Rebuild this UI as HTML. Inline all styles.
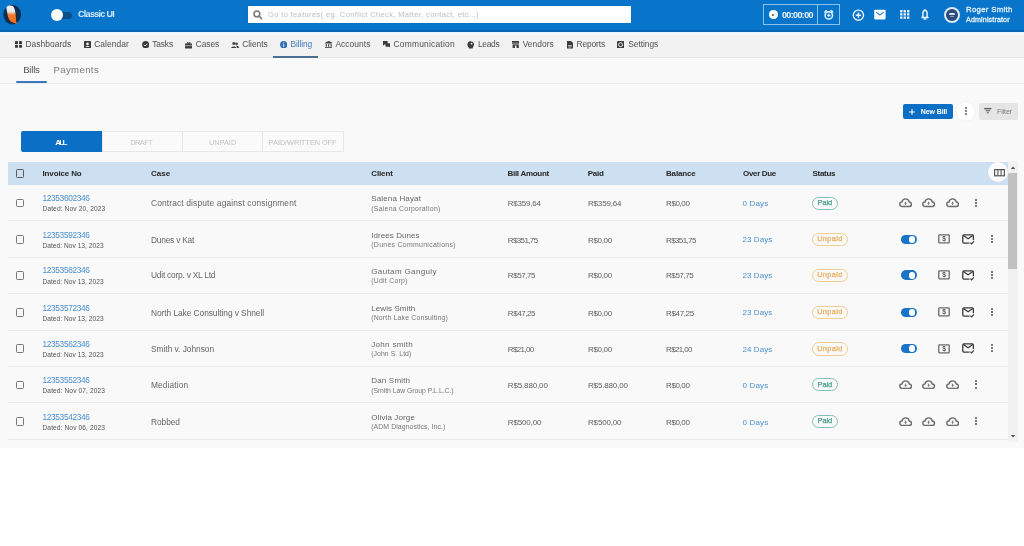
<!DOCTYPE html>
<html><head><meta charset="utf-8"><style>
html,body{margin:0;padding:0;background:#ffffff;width:1024px;height:546px;overflow:hidden;font-family:"Liberation Sans", sans-serif;}
#wrap{position:absolute;left:0;top:0;width:1024px;height:546px;filter:blur(0.4px);}
</style></head><body><div id="wrap">
<div style="position:absolute;left:0;top:0;width:1024px;height:448px;background:#f9f9f9"></div>
<div style="position:absolute;left:0;top:0;width:1024px;height:32px;background:#0875ca"></div>
<div style="position:absolute;left:0;top:29.6px;width:1024px;height:2.1px;background:#0867b4"></div>
<div style="position:absolute;left:0;top:32px;width:1024px;height:3px;background:linear-gradient(#e4f4fb,#fdfdfd)"></div>
<svg style="position:absolute;left:0;top:0" width="30" height="30" viewBox="0 0 30 30">
<defs><linearGradient id="lgg" x1="0" y1="0" x2="0" y2="30" gradientUnits="userSpaceOnUse"><stop offset="0.38" stop-color="#e8edf1"/><stop offset="0.5" stop-color="#f7782a"/><stop offset="1" stop-color="#f5620c"/></linearGradient><clipPath id="lg"><path d="M6.4 7.2 C7.2 5.2 11.6 4.9 13.3 6.6 C14.8 8.6 15.6 12.6 15.8 16.6 C15.9 19.8 16.4 22.4 16.8 23.8 C14.2 23.4 11.3 22.3 9.8 20.6 C8.3 18.6 7.6 15.6 7.2 12.6 C6.9 10.6 6.3 8.8 6.4 7.2 Z"/></clipPath></defs>
<ellipse cx="12.2" cy="14.6" rx="8.9" ry="9.8" fill="#0e2f4d"/>
<g clip-path="url(#lg)"><rect x="0" y="0" width="30" height="30" fill="url(#lgg)"/></g>
</svg>
<div style="position:absolute;left:56px;top:12px;width:16px;height:7px;border-radius:4px;background:#0b4f8c"></div>
<div style="position:absolute;left:51px;top:9px;width:12px;height:12px;border-radius:50%;background:#fff"></div>
<div style="position:absolute;left:248px;top:5.7px;width:383px;height:17.8px;background:#fff;box-shadow:0 0 0.6px rgba(0,0,0,0.25)"></div>
<svg style="position:absolute;left:252px;top:9px" width="12" height="12" viewBox="0 0 12 12">
<circle cx="4.9" cy="4.9" r="2.9" fill="none" stroke="#7a7a7a" stroke-width="1.5"/>
<line x1="7" y1="7" x2="9.6" y2="9.6" stroke="#7a7a7a" stroke-width="1.7" stroke-linecap="round"/></svg>
<div style="position:absolute;left:763px;top:4px;width:77px;height:20.6px;border:1px solid #86c5f2;box-sizing:border-box"></div>
<div style="position:absolute;left:817px;top:4px;width:1px;height:20.6px;background:#86c5f2"></div>
<div style="position:absolute;left:769px;top:10.3px;width:8.5px;height:8.5px;border-radius:50%;background:#fff"></div>
<div style="position:absolute;left:772.2px;top:13.5px;width:2.2px;height:2.2px;border-radius:50%;background:#555"></div>
<svg style="position:absolute;left:822px;top:8px" width="14" height="14" viewBox="0 0 14 14">
<circle cx="6.8" cy="7.4" r="3.7" fill="none" stroke="#e8f4ff" stroke-width="1.5"/>
<path d="M2.6 4.6 A2 2 0 0 1 5 2.6 Z M11 4.6 A2 2 0 0 0 8.6 2.6 Z" fill="#e8f4ff" stroke="#e8f4ff" stroke-width="0.9" stroke-linejoin="round"/>
<path d="M6.8 5.8 V9 M5.2 7.4 H8.4" stroke="#e8f4ff" stroke-width="1.2"/>
</svg>
<svg style="position:absolute;left:851px;top:8px" width="15" height="15" viewBox="0 0 15 15">
<circle cx="7.4" cy="7.2" r="5.1" fill="none" stroke="#e8f4ff" stroke-width="1.4"/>
<path d="M7.4 4.6 V9.8 M4.8 7.2 H10" stroke="#e8f4ff" stroke-width="1.5"/></svg>
<svg style="position:absolute;left:873px;top:9px" width="14" height="12" viewBox="0 0 14 12">
<rect x="1.2" y="0.8" width="11.4" height="9.6" rx="0.8" fill="#f4faff"/>
<path d="M3.2 3.2 L6.9 6 L10.6 3.2" fill="none" stroke="#4a8fd0" stroke-width="1.1"/></svg>
<svg style="position:absolute;left:900px;top:10.2px" width="10" height="9" viewBox="0 0 10 9"><rect x="0.1" y="0.1" width="2.4" height="2.3" rx="0.3" fill="#eaf5ff"/><rect x="3.5500000000000003" y="0.1" width="2.4" height="2.3" rx="0.3" fill="#eaf5ff"/><rect x="7.0" y="0.1" width="2.4" height="2.3" rx="0.3" fill="#eaf5ff"/><rect x="0.1" y="3.25" width="2.4" height="2.3" rx="0.3" fill="#eaf5ff"/><rect x="3.5500000000000003" y="3.25" width="2.4" height="2.3" rx="0.3" fill="#eaf5ff"/><rect x="7.0" y="3.25" width="2.4" height="2.3" rx="0.3" fill="#eaf5ff"/><rect x="0.1" y="6.3999999999999995" width="2.4" height="2.3" rx="0.3" fill="#eaf5ff"/><rect x="3.5500000000000003" y="6.3999999999999995" width="2.4" height="2.3" rx="0.3" fill="#eaf5ff"/><rect x="7.0" y="6.3999999999999995" width="2.4" height="2.3" rx="0.3" fill="#eaf5ff"/></svg>
<svg style="position:absolute;left:919px;top:8px" width="12" height="13" viewBox="0 0 12 13">
<path d="M6 2.6 C4.5 2.6 3.9 4 3.9 5.6 V8.4 L3 9.6 H9 L8.1 8.4 V5.6 C8.1 4 7.5 2.6 6 2.6 Z" fill="none" stroke="#eaf5ff" stroke-width="1.5" stroke-linejoin="round"/>
<circle cx="6" cy="1.9" r="0.8" fill="#eaf5ff"/>
<path d="M5.1 11 H6.9" stroke="#eaf5ff" stroke-width="1.4" stroke-linecap="round"/></svg>
<div style="position:absolute;left:944px;top:6.8px;width:16px;height:16px;border-radius:50%;background:#d9ecfa"></div>
<div style="position:absolute;left:945.8px;top:8.6px;width:12.4px;height:12.4px;border-radius:50%;background:#2d4a78"></div>
<div style="position:absolute;left:949.3px;top:12.8px;width:5.4px;height:2.4px;background:#d5e0f0;border-radius:1px"></div>
<div style="position:absolute;left:950px;top:16.4px;width:4px;height:0.8px;background:#7f98bd"></div>
<div style="position:absolute;left:0;top:35px;width:1024px;height:22.5px;background:#f2f2f2"></div>
<div style="position:absolute;left:0;top:57px;width:1024px;height:1px;background:#e4e4e4"></div>
<svg style="position:absolute;left:15px;top:41.4px" width="7" height="7" viewBox="0 0 7 7"><rect x="0" y="0" width="3" height="3" rx="0.6" fill="#3c3c3c"/><rect x="4" y="0" width="3" height="3" rx="0.6" fill="#3c3c3c"/><rect x="0" y="3.8" width="3" height="3" rx="0.6" fill="#3c3c3c"/><rect x="4" y="3.8" width="3" height="3" rx="0.6" fill="#3c3c3c"/></svg>
<svg style="position:absolute;left:83.8px;top:41px" width="7" height="7.4" viewBox="0 0 7 7.4"><rect x="0" y="0" width="7" height="7.4" rx="0.7" fill="#3c3c3c"/><circle cx="3.5" cy="2.9" r="1.3" fill="#f2f2f2"/><path d="M1.5 6 C1.8 4.6 5.2 4.6 5.5 6 Z" fill="#f2f2f2"/></svg>
<svg style="position:absolute;left:141.5px;top:41px" width="7.4" height="7.4" viewBox="0 0 7.4 7.4"><circle cx="3.7" cy="3.7" r="3.6" fill="#3c3c3c"/><path d="M2 3.8 L3.2 5 L5.5 2.6" fill="none" stroke="#f2f2f2" stroke-width="1"/></svg>
<svg style="position:absolute;left:185px;top:42px" width="7.2" height="6.6" viewBox="0 0 7.2 6.6"><rect x="2.3" y="0" width="2.6" height="1.6" fill="none" stroke="#3c3c3c" stroke-width="0.8"/><rect x="0" y="1.6" width="7.2" height="5" rx="0.6" fill="#3c3c3c"/><rect x="0" y="3.5" width="7.2" height="0.6" fill="#f2f2f2"/></svg>
<svg style="position:absolute;left:230.8px;top:41.8px" width="8" height="6.4" viewBox="0 0 8 6.4"><circle cx="2.8" cy="1.6" r="1.5" fill="#3c3c3c"/><circle cx="5.6" cy="1.7" r="1.3" fill="#3c3c3c"/><path d="M0 6.2 C0 3.8 5.6 3.8 5.6 6.2 Z" fill="#3c3c3c"/><path d="M4.5 3.6 C6.4 3.5 8 4.3 8 6.2 H6.2 C6.2 5 5.6 4.2 4.5 3.6 Z" fill="#3c3c3c"/></svg>
<svg style="position:absolute;left:279.6px;top:41px" width="7.4" height="7.4" viewBox="0 0 7.4 7.4"><circle cx="3.7" cy="3.7" r="3.6" fill="#2f6fb5"/><rect x="3.2" y="3.1" width="1" height="2.8" fill="#f2f2f2"/><circle cx="3.7" cy="1.9" r="0.55" fill="#f2f2f2"/></svg>
<svg style="position:absolute;left:324.6px;top:41px" width="7.4" height="7.4" viewBox="0 0 7.4 7.4"><path d="M3.7 0 L7.4 1.8 V2.6 H0 V1.8 Z" fill="#3c3c3c"/><rect x="0.7" y="3.1" width="1.1" height="2.6" fill="#3c3c3c"/><rect x="3.15" y="3.1" width="1.1" height="2.6" fill="#3c3c3c"/><rect x="5.6" y="3.1" width="1.1" height="2.6" fill="#3c3c3c"/><rect x="0" y="6.2" width="7.4" height="1.2" fill="#3c3c3c"/></svg>
<svg style="position:absolute;left:382.6px;top:41.4px" width="7.6" height="7" viewBox="0 0 7.6 7"><path d="M0 0 H4.6 V3.4 H1.6 L0 4.8 Z" fill="#3c3c3c"/><path d="M2.6 2.2 H7.6 V7 L6.2 5.8 H2.6 Z" fill="#3c3c3c"/></svg>
<svg style="position:absolute;left:466.6px;top:41px" width="7.4" height="7.6" viewBox="0 0 7.4 7.6"><path d="M2.2 0.6 C3.6 -0.3 6.6 0.6 7 2.8 C7.4 4.6 6 5.4 5.6 7.4 H2 C1.8 6.2 0.2 5.6 0.4 3.4 C0.5 2.2 1.2 1.2 2.2 0.6 Z" fill="#3c3c3c"/><circle cx="4.6" cy="2.7" r="0.9" fill="#f2f2f2"/></svg>
<svg style="position:absolute;left:511.6px;top:41.4px" width="7.4" height="7" viewBox="0 0 7.4 7"><path d="M0 0 H7.4 V3 H0 Z" fill="#3c3c3c"/><rect x="0.6" y="3.4" width="6.2" height="3.6" fill="#3c3c3c"/><rect x="2.9" y="4.6" width="1.6" height="2.4" fill="#f2f2f2"/><rect x="0" y="1.8" width="7.4" height="0.5" fill="#f2f2f2"/></svg>
<svg style="position:absolute;left:567px;top:41px" width="6" height="7.6" viewBox="0 0 6 7.6"><path d="M0 0 H4 L6 2 V7.6 H0 Z" fill="#3c3c3c"/><rect x="1.2" y="4.2" width="3.6" height="0.7" fill="#f2f2f2"/><rect x="1.2" y="5.6" width="3.6" height="0.7" fill="#f2f2f2"/></svg>
<svg style="position:absolute;left:617px;top:41px" width="7.2" height="7.4" viewBox="0 0 7.2 7.4"><rect x="0" y="0" width="7.2" height="7.4" rx="1" fill="#3c3c3c"/><circle cx="3.6" cy="3.7" r="2" fill="none" stroke="#f2f2f2" stroke-width="1"/></svg>
<div style="position:absolute;left:273px;top:56px;width:45px;height:2px;background:#4a6f94"></div>
<div style="position:absolute;left:0;top:83px;width:1024px;height:1px;background:#e9e9e9"></div>
<div style="position:absolute;left:16px;top:81.2px;width:31px;height:2.2px;background:#3b78bd;border-radius:1px"></div>
<div style="position:absolute;left:903px;top:103.6px;width:50px;height:15.6px;background:#0b6fc6;border-radius:2px"></div>
<svg style="position:absolute;left:908px;top:107.6px" width="8" height="8" viewBox="0 0 8 8"><path d="M4 1.2 V6.8 M1.2 4 H6.8" stroke="#fff" stroke-width="1.1"/></svg>
<div style="position:absolute;left:956px;top:102px;width:19px;height:19px;border-radius:50%;background:#fff;box-shadow:0 0 1.5px rgba(0,0,0,0.12)"></div>
<div style="position:absolute;left:964.8px;top:107.19999999999999px;width:1.8px;height:1.8px;border-radius:50%;background:#5a5a5a"></div>
<div style="position:absolute;left:964.8px;top:110.3px;width:1.8px;height:1.8px;border-radius:50%;background:#5a5a5a"></div>
<div style="position:absolute;left:964.8px;top:113.39999999999999px;width:1.8px;height:1.8px;border-radius:50%;background:#5a5a5a"></div>
<div style="position:absolute;left:979px;top:103.2px;width:39px;height:16.4px;background:#e5e5e5;border-radius:2px"></div>
<svg style="position:absolute;left:983.5px;top:107px" width="8" height="8" viewBox="0 0 8 8"><path d="M0.3 1.6 H7.4 M1.6 3.7 H6.1 M2.9 5.8 H4.8" stroke="#555" stroke-width="1.1"/></svg>
<div style="position:absolute;left:102px;top:131.2px;width:241.6px;height:21px;border:1px solid #e7e7e7;box-sizing:border-box;background:#fafafa"></div>
<div style="position:absolute;left:182px;top:131.2px;width:1px;height:21px;background:#e7e7e7"></div>
<div style="position:absolute;left:262px;top:131.2px;width:1px;height:21px;background:#e7e7e7"></div>
<div style="position:absolute;left:21px;top:131.2px;width:81px;height:21px;background:#0b6fc6;border-radius:2px 0 0 2px"></div>
<div style="position:absolute;left:8px;top:161.5px;width:1000px;height:23.7px;background:#cde0f1"></div>
<div style="position:absolute;left:16px;top:169.3px;width:8.4px;height:8.4px;border:1.2px solid #5a5a5a;box-sizing:border-box;border-radius:1.4px"></div>
<div style="position:absolute;left:988px;top:162px;width:20px;height:20px;border-radius:50%;background:#fbfbfb;box-shadow:0 0 1px rgba(0,0,0,0.08)"></div>
<svg style="position:absolute;left:993.5px;top:169.4px" width="11" height="7.4" viewBox="0 0 11 7.4"><rect x="0.6" y="0.6" width="9.8" height="6.2" fill="none" stroke="#555" stroke-width="1.2"/><path d="M3.9 0.6 V6.8 M7.1 0.6 V6.8" stroke="#555" stroke-width="1.1"/></svg>
<div style="position:absolute;left:8px;top:220.40px;width:1000px;height:1px;background:#e9e9e9"></div>
<div style="position:absolute;left:15.8px;top:198.80px;width:8.6px;height:8.6px;border:1.2px solid #777;box-sizing:border-box;border-radius:1.5px"></div>
<div style="position:absolute;left:812px;top:196.70px;width:26px;height:13px;border:1.2px solid #80c3b4;box-sizing:border-box;border-radius:7px"></div>
<svg style="position:absolute;left:898.8px;top:198.40px" width="13.4" height="9.4" viewBox="0 0 13.4 9.4"><path d="M3.3 8.5 C1.6 8.5 0.8 7.4 0.8 6.2 C0.8 5 1.7 4.1 2.9 4.1 C3.3 2.2 4.8 0.9 6.6 0.9 C8.5 0.9 9.9 2.2 10.3 4.1 C11.6 4.2 12.5 5.1 12.5 6.3 C12.5 7.6 11.6 8.5 10.2 8.5 Z" fill="none" stroke="#6e6e6e" stroke-width="1.45" stroke-linejoin="round"/><path d="M6.6 3.8 V5.4" stroke="#6e6e6e" stroke-width="1.1"/><path d="M5.2 5.2 H8 L6.6 7 Z" fill="#6e6e6e"/></svg>
<svg style="position:absolute;left:922.3px;top:198.40px" width="13.4" height="9.4" viewBox="0 0 13.4 9.4"><path d="M3.3 8.5 C1.6 8.5 0.8 7.4 0.8 6.2 C0.8 5 1.7 4.1 2.9 4.1 C3.3 2.2 4.8 0.9 6.6 0.9 C8.5 0.9 9.9 2.2 10.3 4.1 C11.6 4.2 12.5 5.1 12.5 6.3 C12.5 7.6 11.6 8.5 10.2 8.5 Z" fill="none" stroke="#6e6e6e" stroke-width="1.45" stroke-linejoin="round"/><path d="M6.6 3.8 V5.4" stroke="#6e6e6e" stroke-width="1.1"/><path d="M5.2 5.2 H8 L6.6 7 Z" fill="#6e6e6e"/></svg>
<svg style="position:absolute;left:946px;top:198.40px" width="13.4" height="9.4" viewBox="0 0 13.4 9.4"><path d="M3.3 8.5 C1.6 8.5 0.8 7.4 0.8 6.2 C0.8 5 1.7 4.1 2.9 4.1 C3.3 2.2 4.8 0.9 6.6 0.9 C8.5 0.9 9.9 2.2 10.3 4.1 C11.6 4.2 12.5 5.1 12.5 6.3 C12.5 7.6 11.6 8.5 10.2 8.5 Z" fill="none" stroke="#6e6e6e" stroke-width="1.45" stroke-linejoin="round"/><path d="M6.6 3.8 V5.4" stroke="#6e6e6e" stroke-width="1.1"/><path d="M5.2 5.2 H8 L6.6 7 Z" fill="#6e6e6e"/></svg>
<div style="position:absolute;left:975.3px;top:198.60px;width:2px;height:2px;border-radius:50%;background:#505050"></div>
<div style="position:absolute;left:975.3px;top:201.70px;width:2px;height:2px;border-radius:50%;background:#505050"></div>
<div style="position:absolute;left:975.3px;top:204.80px;width:2px;height:2px;border-radius:50%;background:#505050"></div>
<div style="position:absolute;left:8px;top:257.00px;width:1000px;height:1px;background:#e9e9e9"></div>
<div style="position:absolute;left:15.8px;top:235.22px;width:8.6px;height:8.6px;border:1.2px solid #777;box-sizing:border-box;border-radius:1.5px"></div>
<div style="position:absolute;left:811.6px;top:233.02px;width:36px;height:13.4px;border:1.2px solid #f2cd90;box-sizing:border-box;border-radius:7px"></div>
<div style="position:absolute;left:900.8px;top:234.52px;width:15.8px;height:9.4px;border-radius:5px;background:#1a73c6"></div>
<div style="position:absolute;left:908.5px;top:235.82px;width:6.8px;height:6.8px;border-radius:50%;background:#fff"></div>
<svg style="position:absolute;left:938px;top:234.42px" width="12" height="10" viewBox="0 0 12 10"><rect x="0.8" y="0.8" width="10.4" height="8" rx="0.6" fill="none" stroke="#6a6a6a" stroke-width="1.3"/><text x="6" y="7.4" font-family="Liberation Sans" font-size="6.6" font-weight="700" text-anchor="middle" fill="#555">$</text></svg>
<svg style="position:absolute;left:962px;top:233.92px" width="13" height="11" viewBox="0 0 13 11"><path d="M7.5 9.2 H1.9 C1.2 9.2 0.8 8.8 0.8 8.1 V1.9 C0.8 1.2 1.2 0.8 1.9 0.8 H10.3 C11 0.8 11.4 1.2 11.4 1.9 V6.2" fill="none" stroke="#3a3a3a" stroke-width="1.3"/><path d="M1.4 1.6 L6.1 4.8 L10.8 1.6" fill="none" stroke="#3a3a3a" stroke-width="1.2"/><path d="M8.4 8.6 L9.6 9.8 L11.9 7.4" fill="none" stroke="#3a3a3a" stroke-width="1.2"/></svg>
<div style="position:absolute;left:990.5px;top:235.02px;width:2px;height:2px;border-radius:50%;background:#505050"></div>
<div style="position:absolute;left:990.5px;top:238.12px;width:2px;height:2px;border-radius:50%;background:#505050"></div>
<div style="position:absolute;left:990.5px;top:241.22px;width:2px;height:2px;border-radius:50%;background:#505050"></div>
<div style="position:absolute;left:8px;top:292.70px;width:1000px;height:1px;background:#e9e9e9"></div>
<div style="position:absolute;left:15.8px;top:271.14px;width:8.6px;height:8.6px;border:1.2px solid #777;box-sizing:border-box;border-radius:1.5px"></div>
<div style="position:absolute;left:811.6px;top:268.94px;width:36px;height:13.4px;border:1.2px solid #f2cd90;box-sizing:border-box;border-radius:7px"></div>
<div style="position:absolute;left:900.8px;top:270.44px;width:15.8px;height:9.4px;border-radius:5px;background:#1a73c6"></div>
<div style="position:absolute;left:908.5px;top:271.74px;width:6.8px;height:6.8px;border-radius:50%;background:#fff"></div>
<svg style="position:absolute;left:938px;top:270.34px" width="12" height="10" viewBox="0 0 12 10"><rect x="0.8" y="0.8" width="10.4" height="8" rx="0.6" fill="none" stroke="#6a6a6a" stroke-width="1.3"/><text x="6" y="7.4" font-family="Liberation Sans" font-size="6.6" font-weight="700" text-anchor="middle" fill="#555">$</text></svg>
<svg style="position:absolute;left:962px;top:269.84px" width="13" height="11" viewBox="0 0 13 11"><path d="M7.5 9.2 H1.9 C1.2 9.2 0.8 8.8 0.8 8.1 V1.9 C0.8 1.2 1.2 0.8 1.9 0.8 H10.3 C11 0.8 11.4 1.2 11.4 1.9 V6.2" fill="none" stroke="#3a3a3a" stroke-width="1.3"/><path d="M1.4 1.6 L6.1 4.8 L10.8 1.6" fill="none" stroke="#3a3a3a" stroke-width="1.2"/><path d="M8.4 8.6 L9.6 9.8 L11.9 7.4" fill="none" stroke="#3a3a3a" stroke-width="1.2"/></svg>
<div style="position:absolute;left:990.5px;top:270.94px;width:2px;height:2px;border-radius:50%;background:#505050"></div>
<div style="position:absolute;left:990.5px;top:274.04px;width:2px;height:2px;border-radius:50%;background:#505050"></div>
<div style="position:absolute;left:990.5px;top:277.14px;width:2px;height:2px;border-radius:50%;background:#505050"></div>
<div style="position:absolute;left:8px;top:329.60px;width:1000px;height:1px;background:#e9e9e9"></div>
<div style="position:absolute;left:15.8px;top:308.26px;width:8.6px;height:8.6px;border:1.2px solid #777;box-sizing:border-box;border-radius:1.5px"></div>
<div style="position:absolute;left:811.6px;top:306.06px;width:36px;height:13.4px;border:1.2px solid #f2cd90;box-sizing:border-box;border-radius:7px"></div>
<div style="position:absolute;left:900.8px;top:307.56px;width:15.8px;height:9.4px;border-radius:5px;background:#1a73c6"></div>
<div style="position:absolute;left:908.5px;top:308.86px;width:6.8px;height:6.8px;border-radius:50%;background:#fff"></div>
<svg style="position:absolute;left:938px;top:307.46px" width="12" height="10" viewBox="0 0 12 10"><rect x="0.8" y="0.8" width="10.4" height="8" rx="0.6" fill="none" stroke="#6a6a6a" stroke-width="1.3"/><text x="6" y="7.4" font-family="Liberation Sans" font-size="6.6" font-weight="700" text-anchor="middle" fill="#555">$</text></svg>
<svg style="position:absolute;left:962px;top:306.96px" width="13" height="11" viewBox="0 0 13 11"><path d="M7.5 9.2 H1.9 C1.2 9.2 0.8 8.8 0.8 8.1 V1.9 C0.8 1.2 1.2 0.8 1.9 0.8 H10.3 C11 0.8 11.4 1.2 11.4 1.9 V6.2" fill="none" stroke="#3a3a3a" stroke-width="1.3"/><path d="M1.4 1.6 L6.1 4.8 L10.8 1.6" fill="none" stroke="#3a3a3a" stroke-width="1.2"/><path d="M8.4 8.6 L9.6 9.8 L11.9 7.4" fill="none" stroke="#3a3a3a" stroke-width="1.2"/></svg>
<div style="position:absolute;left:990.5px;top:308.06px;width:2px;height:2px;border-radius:50%;background:#505050"></div>
<div style="position:absolute;left:990.5px;top:311.16px;width:2px;height:2px;border-radius:50%;background:#505050"></div>
<div style="position:absolute;left:990.5px;top:314.26px;width:2px;height:2px;border-radius:50%;background:#505050"></div>
<div style="position:absolute;left:8px;top:365.50px;width:1000px;height:1px;background:#e9e9e9"></div>
<div style="position:absolute;left:15.8px;top:344.48px;width:8.6px;height:8.6px;border:1.2px solid #777;box-sizing:border-box;border-radius:1.5px"></div>
<div style="position:absolute;left:811.6px;top:342.28px;width:36px;height:13.4px;border:1.2px solid #f2cd90;box-sizing:border-box;border-radius:7px"></div>
<div style="position:absolute;left:900.8px;top:343.78px;width:15.8px;height:9.4px;border-radius:5px;background:#1a73c6"></div>
<div style="position:absolute;left:908.5px;top:345.08px;width:6.8px;height:6.8px;border-radius:50%;background:#fff"></div>
<svg style="position:absolute;left:938px;top:343.68px" width="12" height="10" viewBox="0 0 12 10"><rect x="0.8" y="0.8" width="10.4" height="8" rx="0.6" fill="none" stroke="#6a6a6a" stroke-width="1.3"/><text x="6" y="7.4" font-family="Liberation Sans" font-size="6.6" font-weight="700" text-anchor="middle" fill="#555">$</text></svg>
<svg style="position:absolute;left:962px;top:343.18px" width="13" height="11" viewBox="0 0 13 11"><path d="M7.5 9.2 H1.9 C1.2 9.2 0.8 8.8 0.8 8.1 V1.9 C0.8 1.2 1.2 0.8 1.9 0.8 H10.3 C11 0.8 11.4 1.2 11.4 1.9 V6.2" fill="none" stroke="#3a3a3a" stroke-width="1.3"/><path d="M1.4 1.6 L6.1 4.8 L10.8 1.6" fill="none" stroke="#3a3a3a" stroke-width="1.2"/><path d="M8.4 8.6 L9.6 9.8 L11.9 7.4" fill="none" stroke="#3a3a3a" stroke-width="1.2"/></svg>
<div style="position:absolute;left:990.5px;top:344.28px;width:2px;height:2px;border-radius:50%;background:#505050"></div>
<div style="position:absolute;left:990.5px;top:347.38px;width:2px;height:2px;border-radius:50%;background:#505050"></div>
<div style="position:absolute;left:990.5px;top:350.48px;width:2px;height:2px;border-radius:50%;background:#505050"></div>
<div style="position:absolute;left:8px;top:402.10px;width:1000px;height:1px;background:#e9e9e9"></div>
<div style="position:absolute;left:15.8px;top:380.50px;width:8.6px;height:8.6px;border:1.2px solid #777;box-sizing:border-box;border-radius:1.5px"></div>
<div style="position:absolute;left:812px;top:378.40px;width:26px;height:13px;border:1.2px solid #80c3b4;box-sizing:border-box;border-radius:7px"></div>
<svg style="position:absolute;left:898.8px;top:380.10px" width="13.4" height="9.4" viewBox="0 0 13.4 9.4"><path d="M3.3 8.5 C1.6 8.5 0.8 7.4 0.8 6.2 C0.8 5 1.7 4.1 2.9 4.1 C3.3 2.2 4.8 0.9 6.6 0.9 C8.5 0.9 9.9 2.2 10.3 4.1 C11.6 4.2 12.5 5.1 12.5 6.3 C12.5 7.6 11.6 8.5 10.2 8.5 Z" fill="none" stroke="#6e6e6e" stroke-width="1.45" stroke-linejoin="round"/><path d="M6.6 3.8 V5.4" stroke="#6e6e6e" stroke-width="1.1"/><path d="M5.2 5.2 H8 L6.6 7 Z" fill="#6e6e6e"/></svg>
<svg style="position:absolute;left:922.3px;top:380.10px" width="13.4" height="9.4" viewBox="0 0 13.4 9.4"><path d="M3.3 8.5 C1.6 8.5 0.8 7.4 0.8 6.2 C0.8 5 1.7 4.1 2.9 4.1 C3.3 2.2 4.8 0.9 6.6 0.9 C8.5 0.9 9.9 2.2 10.3 4.1 C11.6 4.2 12.5 5.1 12.5 6.3 C12.5 7.6 11.6 8.5 10.2 8.5 Z" fill="none" stroke="#6e6e6e" stroke-width="1.45" stroke-linejoin="round"/><path d="M6.6 3.8 V5.4" stroke="#6e6e6e" stroke-width="1.1"/><path d="M5.2 5.2 H8 L6.6 7 Z" fill="#6e6e6e"/></svg>
<svg style="position:absolute;left:946px;top:380.10px" width="13.4" height="9.4" viewBox="0 0 13.4 9.4"><path d="M3.3 8.5 C1.6 8.5 0.8 7.4 0.8 6.2 C0.8 5 1.7 4.1 2.9 4.1 C3.3 2.2 4.8 0.9 6.6 0.9 C8.5 0.9 9.9 2.2 10.3 4.1 C11.6 4.2 12.5 5.1 12.5 6.3 C12.5 7.6 11.6 8.5 10.2 8.5 Z" fill="none" stroke="#6e6e6e" stroke-width="1.45" stroke-linejoin="round"/><path d="M6.6 3.8 V5.4" stroke="#6e6e6e" stroke-width="1.1"/><path d="M5.2 5.2 H8 L6.6 7 Z" fill="#6e6e6e"/></svg>
<div style="position:absolute;left:975.3px;top:380.30px;width:2px;height:2px;border-radius:50%;background:#505050"></div>
<div style="position:absolute;left:975.3px;top:383.40px;width:2px;height:2px;border-radius:50%;background:#505050"></div>
<div style="position:absolute;left:975.3px;top:386.50px;width:2px;height:2px;border-radius:50%;background:#505050"></div>
<div style="position:absolute;left:8px;top:438.80px;width:1000px;height:1px;background:#e9e9e9"></div>
<div style="position:absolute;left:15.8px;top:417.32px;width:8.6px;height:8.6px;border:1.2px solid #777;box-sizing:border-box;border-radius:1.5px"></div>
<div style="position:absolute;left:812px;top:415.22px;width:26px;height:13px;border:1.2px solid #80c3b4;box-sizing:border-box;border-radius:7px"></div>
<svg style="position:absolute;left:898.8px;top:416.92px" width="13.4" height="9.4" viewBox="0 0 13.4 9.4"><path d="M3.3 8.5 C1.6 8.5 0.8 7.4 0.8 6.2 C0.8 5 1.7 4.1 2.9 4.1 C3.3 2.2 4.8 0.9 6.6 0.9 C8.5 0.9 9.9 2.2 10.3 4.1 C11.6 4.2 12.5 5.1 12.5 6.3 C12.5 7.6 11.6 8.5 10.2 8.5 Z" fill="none" stroke="#6e6e6e" stroke-width="1.45" stroke-linejoin="round"/><path d="M6.6 3.8 V5.4" stroke="#6e6e6e" stroke-width="1.1"/><path d="M5.2 5.2 H8 L6.6 7 Z" fill="#6e6e6e"/></svg>
<svg style="position:absolute;left:922.3px;top:416.92px" width="13.4" height="9.4" viewBox="0 0 13.4 9.4"><path d="M3.3 8.5 C1.6 8.5 0.8 7.4 0.8 6.2 C0.8 5 1.7 4.1 2.9 4.1 C3.3 2.2 4.8 0.9 6.6 0.9 C8.5 0.9 9.9 2.2 10.3 4.1 C11.6 4.2 12.5 5.1 12.5 6.3 C12.5 7.6 11.6 8.5 10.2 8.5 Z" fill="none" stroke="#6e6e6e" stroke-width="1.45" stroke-linejoin="round"/><path d="M6.6 3.8 V5.4" stroke="#6e6e6e" stroke-width="1.1"/><path d="M5.2 5.2 H8 L6.6 7 Z" fill="#6e6e6e"/></svg>
<svg style="position:absolute;left:946px;top:416.92px" width="13.4" height="9.4" viewBox="0 0 13.4 9.4"><path d="M3.3 8.5 C1.6 8.5 0.8 7.4 0.8 6.2 C0.8 5 1.7 4.1 2.9 4.1 C3.3 2.2 4.8 0.9 6.6 0.9 C8.5 0.9 9.9 2.2 10.3 4.1 C11.6 4.2 12.5 5.1 12.5 6.3 C12.5 7.6 11.6 8.5 10.2 8.5 Z" fill="none" stroke="#6e6e6e" stroke-width="1.45" stroke-linejoin="round"/><path d="M6.6 3.8 V5.4" stroke="#6e6e6e" stroke-width="1.1"/><path d="M5.2 5.2 H8 L6.6 7 Z" fill="#6e6e6e"/></svg>
<div style="position:absolute;left:975.3px;top:417.12px;width:2px;height:2px;border-radius:50%;background:#505050"></div>
<div style="position:absolute;left:975.3px;top:420.22px;width:2px;height:2px;border-radius:50%;background:#505050"></div>
<div style="position:absolute;left:975.3px;top:423.32px;width:2px;height:2px;border-radius:50%;background:#505050"></div>
<div style="position:absolute;left:1008px;top:161px;width:10px;height:281px;background:#f1f1f1"></div>
<div style="position:absolute;left:1008.3px;top:172.7px;width:9.2px;height:96.6px;background:#c1c1c1"></div>
<svg style="position:absolute;left:1009px;top:164.5px" width="8" height="5" viewBox="0 0 8 5"><path d="M1.8 4 L4 1.6 L6.2 4 Z" fill="#555"/></svg>
<svg style="position:absolute;left:1009px;top:434px" width="8" height="5" viewBox="0 0 8 5"><path d="M1.8 1 L4 3.4 L6.2 1 Z" fill="#555"/></svg>
<div style="position:absolute;left:78.00px;top:10px;font-size:9px;line-height:9px;font-weight:700;color:#d2ebfc;letter-spacing:-0.702px;white-space:pre;">Classic UI</div>
<div style="position:absolute;left:268.00px;top:11px;font-size:7.6px;line-height:7.6px;font-weight:400;color:#bdbdbd;letter-spacing:0.321px;white-space:pre;">Go to features( eg. Conflict Check, Matter, contact, etc...)</div>
<div style="position:absolute;left:782.00px;top:11px;font-size:9px;line-height:9px;font-weight:700;color:#f2f9ff;letter-spacing:-0.632px;white-space:pre;">00:00:00</div>
<div style="position:absolute;left:966.00px;top:6px;font-size:7.8px;line-height:7.8px;font-weight:400;color:#e2f1fd;letter-spacing:0.300px;white-space:pre;-webkit-text-stroke:0.3px #e2f1fd;">Roger Smith</div>
<div style="position:absolute;left:966.00px;top:16px;font-size:7.2px;line-height:7.2px;font-weight:400;color:#e2f1fd;letter-spacing:0.105px;white-space:pre;-webkit-text-stroke:0.3px #e2f1fd;">Administrator</div>
<div style="position:absolute;left:25.40px;top:40px;font-size:8.4px;line-height:8.4px;font-weight:400;color:#4f4f4f;letter-spacing:0.081px;white-space:pre;">Dashboards</div>
<div style="position:absolute;left:94.20px;top:40px;font-size:8.4px;line-height:8.4px;font-weight:400;color:#4f4f4f;letter-spacing:0.072px;white-space:pre;">Calendar</div>
<div style="position:absolute;left:152.30px;top:40px;font-size:8.4px;line-height:8.4px;font-weight:400;color:#4f4f4f;letter-spacing:-0.155px;white-space:pre;">Tasks</div>
<div style="position:absolute;left:195.70px;top:40px;font-size:8.4px;line-height:8.4px;font-weight:400;color:#4f4f4f;letter-spacing:-0.038px;white-space:pre;">Cases</div>
<div style="position:absolute;left:242.20px;top:40px;font-size:8.4px;line-height:8.4px;font-weight:400;color:#4f4f4f;letter-spacing:-0.002px;white-space:pre;">Clients</div>
<div style="position:absolute;left:290.60px;top:40px;font-size:8.4px;line-height:8.4px;font-weight:400;color:#3f78b8;letter-spacing:-0.131px;white-space:pre;">Billing</div>
<div style="position:absolute;left:335.40px;top:40px;font-size:8.4px;line-height:8.4px;font-weight:400;color:#4f4f4f;letter-spacing:0.077px;white-space:pre;">Accounts</div>
<div style="position:absolute;left:393.60px;top:40px;font-size:8.4px;line-height:8.4px;font-weight:400;color:#4f4f4f;letter-spacing:0.231px;white-space:pre;">Communication</div>
<div style="position:absolute;left:478.00px;top:40px;font-size:8.4px;line-height:8.4px;font-weight:400;color:#4f4f4f;letter-spacing:-0.283px;white-space:pre;">Leads</div>
<div style="position:absolute;left:522.70px;top:40px;font-size:8.4px;line-height:8.4px;font-weight:400;color:#4f4f4f;letter-spacing:0.059px;white-space:pre;">Vendors</div>
<div style="position:absolute;left:576.60px;top:40px;font-size:8.4px;line-height:8.4px;font-weight:400;color:#4f4f4f;letter-spacing:-0.123px;white-space:pre;">Reports</div>
<div style="position:absolute;left:628.20px;top:40px;font-size:8.4px;line-height:8.4px;font-weight:400;color:#4f4f4f;letter-spacing:-0.025px;white-space:pre;">Settings</div>
<div style="position:absolute;left:23.20px;top:65px;font-size:9.6px;line-height:9.6px;font-weight:400;color:#555;letter-spacing:-0.223px;white-space:pre;">Bills</div>
<div style="position:absolute;left:53.50px;top:65px;font-size:9.6px;line-height:9.6px;font-weight:400;color:#7a7a7a;letter-spacing:0.363px;white-space:pre;">Payments</div>
<div style="position:absolute;left:920.80px;top:108px;font-size:7px;line-height:7px;font-weight:700;color:#ffffff;letter-spacing:-0.112px;white-space:pre;">New Bill</div>
<div style="position:absolute;left:997.00px;top:108px;font-size:7.2px;line-height:7.2px;font-weight:400;color:#7c7c7c;letter-spacing:-0.156px;white-space:pre;">Filter</div>
<div style="position:absolute;left:55.30px;top:139px;font-size:8px;line-height:8px;font-weight:700;color:#ffffff;letter-spacing:-1.732px;white-space:pre;">ALL</div>
<div style="position:absolute;left:130.20px;top:139px;font-size:7.3px;line-height:7.3px;font-weight:400;color:#c2c2c2;letter-spacing:-0.466px;white-space:pre;">DRAFT</div>
<div style="position:absolute;left:209.00px;top:139px;font-size:7.3px;line-height:7.3px;font-weight:400;color:#c2c2c2;letter-spacing:0.028px;white-space:pre;">UNPAID</div>
<div style="position:absolute;left:268.80px;top:139px;font-size:7.3px;line-height:7.3px;font-weight:400;color:#c2c2c2;letter-spacing:-0.047px;white-space:pre;">PAID/WRITTEN OFF</div>
<div style="position:absolute;left:42.50px;top:170px;font-size:8px;line-height:8px;font-weight:700;color:#262626;letter-spacing:-0.141px;white-space:pre;">Invoice No</div>
<div style="position:absolute;left:151.00px;top:170px;font-size:8px;line-height:8px;font-weight:700;color:#262626;letter-spacing:0.041px;white-space:pre;">Case</div>
<div style="position:absolute;left:371.30px;top:170px;font-size:8px;line-height:8px;font-weight:700;color:#262626;letter-spacing:-0.132px;white-space:pre;">Client</div>
<div style="position:absolute;left:507.50px;top:170px;font-size:8px;line-height:8px;font-weight:700;color:#262626;letter-spacing:-0.292px;white-space:pre;">Bill Amount</div>
<div style="position:absolute;left:587.80px;top:170px;font-size:8px;line-height:8px;font-weight:700;color:#262626;letter-spacing:-0.269px;white-space:pre;">Paid</div>
<div style="position:absolute;left:666.00px;top:170px;font-size:8px;line-height:8px;font-weight:700;color:#262626;letter-spacing:-0.172px;white-space:pre;">Balance</div>
<div style="position:absolute;left:743.10px;top:170px;font-size:8px;line-height:8px;font-weight:700;color:#262626;letter-spacing:-0.346px;white-space:pre;">Over Due</div>
<div style="position:absolute;left:812.60px;top:170px;font-size:8px;line-height:8px;font-weight:700;color:#262626;letter-spacing:-0.320px;white-space:pre;">Status</div>
<div style="position:absolute;left:42.50px;top:194px;font-size:8.3px;line-height:8.3px;font-weight:400;color:#4b8fcf;letter-spacing:-0.334px;white-space:pre;">12353602346</div>
<div style="position:absolute;left:42.50px;top:206px;font-size:6.6px;line-height:6.6px;font-weight:400;color:#555;letter-spacing:0.121px;white-space:pre;">Dated: Nov 20, 2023</div>
<div style="position:absolute;left:151.00px;top:199px;font-size:8.4px;line-height:8.4px;font-weight:400;color:#666;letter-spacing:0.148px;white-space:pre;">Contract dispute against consignment</div>
<div style="position:absolute;left:371.25px;top:195px;font-size:8px;line-height:8px;font-weight:400;color:#666;letter-spacing:0.149px;white-space:pre;">Salena Hayat</div>
<div style="position:absolute;left:371.25px;top:206px;font-size:6.9px;line-height:6.9px;font-weight:400;color:#777;letter-spacing:0.267px;white-space:pre;">(Salena Corporation)</div>
<div style="position:absolute;left:507.80px;top:200px;font-size:8px;line-height:8px;font-weight:400;color:#5e5e5e;letter-spacing:-0.207px;white-space:pre;">R$359,64</div>
<div style="position:absolute;left:588.00px;top:200px;font-size:8px;line-height:8px;font-weight:400;color:#5e5e5e;letter-spacing:-0.178px;white-space:pre;">R$359,64</div>
<div style="position:absolute;left:666.00px;top:200px;font-size:8px;line-height:8px;font-weight:400;color:#5e5e5e;letter-spacing:-0.390px;white-space:pre;">R$0,00</div>
<div style="position:absolute;left:742.50px;top:200px;font-size:8px;line-height:8px;font-weight:400;color:#4b8fcf;letter-spacing:0.180px;white-space:pre;">0 Days</div>
<div style="position:absolute;left:817.60px;top:199px;font-size:7.4px;line-height:7.4px;font-weight:400;color:#4a9f8c;letter-spacing:-0.127px;white-space:pre;-webkit-text-stroke:0.25px #4a9f8c;">Paid</div>
<div style="position:absolute;left:42.50px;top:231px;font-size:8.3px;line-height:8.3px;font-weight:400;color:#4b8fcf;letter-spacing:-0.334px;white-space:pre;">12353592346</div>
<div style="position:absolute;left:42.50px;top:243px;font-size:6.6px;line-height:6.6px;font-weight:400;color:#555;letter-spacing:0.032px;white-space:pre;">Dated: Nov 13, 2023</div>
<div style="position:absolute;left:151.00px;top:236px;font-size:8.4px;line-height:8.4px;font-weight:400;color:#666;letter-spacing:-0.229px;white-space:pre;">Dunes v Kat</div>
<div style="position:absolute;left:371.25px;top:232px;font-size:8px;line-height:8px;font-weight:400;color:#666;letter-spacing:0.070px;white-space:pre;">Idrees Dunes</div>
<div style="position:absolute;left:371.25px;top:242px;font-size:6.9px;line-height:6.9px;font-weight:400;color:#777;letter-spacing:0.310px;white-space:pre;">(Dunes Communications)</div>
<div style="position:absolute;left:507.80px;top:237px;font-size:8px;line-height:8px;font-weight:400;color:#5e5e5e;letter-spacing:-0.621px;white-space:pre;">R$351,75</div>
<div style="position:absolute;left:588.00px;top:237px;font-size:8px;line-height:8px;font-weight:400;color:#5e5e5e;letter-spacing:-0.330px;white-space:pre;">R$0,00</div>
<div style="position:absolute;left:666.00px;top:237px;font-size:8px;line-height:8px;font-weight:400;color:#5e5e5e;letter-spacing:-0.621px;white-space:pre;">R$351,75</div>
<div style="position:absolute;left:742.50px;top:236px;font-size:8px;line-height:8px;font-weight:400;color:#4b8fcf;letter-spacing:0.059px;white-space:pre;">23 Days</div>
<div style="position:absolute;left:817.20px;top:235px;font-size:7.4px;line-height:7.4px;font-weight:400;color:#e8b060;letter-spacing:0.338px;white-space:pre;-webkit-text-stroke:0.25px #e8b060;">Unpaid</div>
<div style="position:absolute;left:42.50px;top:266px;font-size:8.3px;line-height:8.3px;font-weight:400;color:#4b8fcf;letter-spacing:-0.334px;white-space:pre;">12353582346</div>
<div style="position:absolute;left:42.50px;top:279px;font-size:6.6px;line-height:6.6px;font-weight:400;color:#555;letter-spacing:0.032px;white-space:pre;">Dated: Nov 13, 2023</div>
<div style="position:absolute;left:151.00px;top:271px;font-size:8.4px;line-height:8.4px;font-weight:400;color:#666;letter-spacing:-0.230px;white-space:pre;">Udit corp. v XL Ltd</div>
<div style="position:absolute;left:371.25px;top:268px;font-size:8px;line-height:8px;font-weight:400;color:#666;letter-spacing:0.367px;white-space:pre;">Gautam Ganguly</div>
<div style="position:absolute;left:371.25px;top:278px;font-size:6.9px;line-height:6.9px;font-weight:400;color:#777;letter-spacing:0.245px;white-space:pre;">(Udit Corp)</div>
<div style="position:absolute;left:507.80px;top:272px;font-size:8px;line-height:8px;font-weight:400;color:#5e5e5e;letter-spacing:-0.416px;white-space:pre;">R$57,75</div>
<div style="position:absolute;left:588.00px;top:272px;font-size:8px;line-height:8px;font-weight:400;color:#5e5e5e;letter-spacing:-0.330px;white-space:pre;">R$0,00</div>
<div style="position:absolute;left:666.00px;top:272px;font-size:8px;line-height:8px;font-weight:400;color:#5e5e5e;letter-spacing:-0.416px;white-space:pre;">R$57,75</div>
<div style="position:absolute;left:742.50px;top:272px;font-size:8px;line-height:8px;font-weight:400;color:#4b8fcf;letter-spacing:0.059px;white-space:pre;">23 Days</div>
<div style="position:absolute;left:817.20px;top:271px;font-size:7.4px;line-height:7.4px;font-weight:400;color:#e8b060;letter-spacing:0.338px;white-space:pre;-webkit-text-stroke:0.25px #e8b060;">Unpaid</div>
<div style="position:absolute;left:42.50px;top:304px;font-size:8.3px;line-height:8.3px;font-weight:400;color:#4b8fcf;letter-spacing:-0.334px;white-space:pre;">12353572346</div>
<div style="position:absolute;left:42.50px;top:316px;font-size:6.6px;line-height:6.6px;font-weight:400;color:#555;letter-spacing:0.032px;white-space:pre;">Dated: Nov 13, 2023</div>
<div style="position:absolute;left:151.00px;top:309px;font-size:8.4px;line-height:8.4px;font-weight:400;color:#666;letter-spacing:-0.066px;white-space:pre;">North Lake Consulting v Shnell</div>
<div style="position:absolute;left:371.25px;top:305px;font-size:8px;line-height:8px;font-weight:400;color:#666;letter-spacing:0.087px;white-space:pre;">Lewis Smith</div>
<div style="position:absolute;left:371.25px;top:315px;font-size:6.9px;line-height:6.9px;font-weight:400;color:#777;letter-spacing:0.172px;white-space:pre;">(North Lake Consulting)</div>
<div style="position:absolute;left:507.80px;top:310px;font-size:8px;line-height:8px;font-weight:400;color:#5e5e5e;letter-spacing:-0.416px;white-space:pre;">R$47,25</div>
<div style="position:absolute;left:588.00px;top:310px;font-size:8px;line-height:8px;font-weight:400;color:#5e5e5e;letter-spacing:-0.330px;white-space:pre;">R$0,00</div>
<div style="position:absolute;left:666.00px;top:310px;font-size:8px;line-height:8px;font-weight:400;color:#5e5e5e;letter-spacing:-0.349px;white-space:pre;">R$47,25</div>
<div style="position:absolute;left:742.50px;top:309px;font-size:8px;line-height:8px;font-weight:400;color:#4b8fcf;letter-spacing:0.059px;white-space:pre;">23 Days</div>
<div style="position:absolute;left:817.20px;top:308px;font-size:7.4px;line-height:7.4px;font-weight:400;color:#e8b060;letter-spacing:0.338px;white-space:pre;-webkit-text-stroke:0.25px #e8b060;">Unpaid</div>
<div style="position:absolute;left:42.50px;top:340px;font-size:8.3px;line-height:8.3px;font-weight:400;color:#4b8fcf;letter-spacing:-0.334px;white-space:pre;">12353562346</div>
<div style="position:absolute;left:42.50px;top:352px;font-size:6.6px;line-height:6.6px;font-weight:400;color:#555;letter-spacing:0.032px;white-space:pre;">Dated: Nov 13, 2023</div>
<div style="position:absolute;left:151.00px;top:345px;font-size:8.4px;line-height:8.4px;font-weight:400;color:#666;letter-spacing:-0.031px;white-space:pre;">Smith v. Johnson</div>
<div style="position:absolute;left:371.25px;top:341px;font-size:8px;line-height:8px;font-weight:400;color:#666;letter-spacing:0.313px;white-space:pre;">John smith</div>
<div style="position:absolute;left:371.25px;top:351px;font-size:6.9px;line-height:6.9px;font-weight:400;color:#777;letter-spacing:0.050px;white-space:pre;">(John S. Ltd)</div>
<div style="position:absolute;left:507.80px;top:346px;font-size:8px;line-height:8px;font-weight:400;color:#5e5e5e;letter-spacing:-0.633px;white-space:pre;">R$21,00</div>
<div style="position:absolute;left:588.00px;top:346px;font-size:8px;line-height:8px;font-weight:400;color:#5e5e5e;letter-spacing:-0.330px;white-space:pre;">R$0,00</div>
<div style="position:absolute;left:666.00px;top:346px;font-size:8px;line-height:8px;font-weight:400;color:#5e5e5e;letter-spacing:-0.633px;white-space:pre;">R$21,00</div>
<div style="position:absolute;left:742.50px;top:346px;font-size:8px;line-height:8px;font-weight:400;color:#4b8fcf;letter-spacing:0.059px;white-space:pre;">24 Days</div>
<div style="position:absolute;left:817.20px;top:345px;font-size:7.4px;line-height:7.4px;font-weight:400;color:#e8b060;letter-spacing:0.338px;white-space:pre;-webkit-text-stroke:0.25px #e8b060;">Unpaid</div>
<div style="position:absolute;left:42.50px;top:376px;font-size:8.3px;line-height:8.3px;font-weight:400;color:#4b8fcf;letter-spacing:-0.334px;white-space:pre;">12353552346</div>
<div style="position:absolute;left:42.50px;top:388px;font-size:6.6px;line-height:6.6px;font-weight:400;color:#555;letter-spacing:0.105px;white-space:pre;">Dated: Nov 07, 2023</div>
<div style="position:absolute;left:151.00px;top:381px;font-size:8.4px;line-height:8.4px;font-weight:400;color:#666;letter-spacing:0.106px;white-space:pre;">Mediation</div>
<div style="position:absolute;left:371.25px;top:377px;font-size:8px;line-height:8px;font-weight:400;color:#666;letter-spacing:0.181px;white-space:pre;">Dan Smith</div>
<div style="position:absolute;left:371.25px;top:388px;font-size:6.9px;line-height:6.9px;font-weight:400;color:#777;letter-spacing:-0.056px;white-space:pre;">(Smith Law Group P.L.L.C.)</div>
<div style="position:absolute;left:507.80px;top:382px;font-size:8px;line-height:8px;font-weight:400;color:#5e5e5e;letter-spacing:-0.146px;white-space:pre;">R$5.880,00</div>
<div style="position:absolute;left:588.00px;top:382px;font-size:8px;line-height:8px;font-weight:400;color:#5e5e5e;letter-spacing:-0.158px;white-space:pre;">R$5.880,00</div>
<div style="position:absolute;left:666.00px;top:382px;font-size:8px;line-height:8px;font-weight:400;color:#5e5e5e;letter-spacing:-0.390px;white-space:pre;">R$0,00</div>
<div style="position:absolute;left:742.50px;top:382px;font-size:8px;line-height:8px;font-weight:400;color:#4b8fcf;letter-spacing:0.180px;white-space:pre;">0 Days</div>
<div style="position:absolute;left:817.60px;top:381px;font-size:7.4px;line-height:7.4px;font-weight:400;color:#4a9f8c;letter-spacing:-0.127px;white-space:pre;-webkit-text-stroke:0.25px #4a9f8c;">Paid</div>
<div style="position:absolute;left:42.50px;top:413px;font-size:8.3px;line-height:8.3px;font-weight:400;color:#4b8fcf;letter-spacing:-0.334px;white-space:pre;">12353542346</div>
<div style="position:absolute;left:42.50px;top:425px;font-size:6.6px;line-height:6.6px;font-weight:400;color:#555;letter-spacing:0.105px;white-space:pre;">Dated: Nov 06, 2023</div>
<div style="position:absolute;left:151.00px;top:418px;font-size:8.4px;line-height:8.4px;font-weight:400;color:#666;letter-spacing:-0.076px;white-space:pre;">Robbed</div>
<div style="position:absolute;left:371.25px;top:414px;font-size:8px;line-height:8px;font-weight:400;color:#666;letter-spacing:0.124px;white-space:pre;">Olivia Jorge</div>
<div style="position:absolute;left:371.25px;top:424px;font-size:6.9px;line-height:6.9px;font-weight:400;color:#777;letter-spacing:0.076px;white-space:pre;">(ADM Diagnostics, Inc.)</div>
<div style="position:absolute;left:507.80px;top:419px;font-size:8px;line-height:8px;font-weight:400;color:#5e5e5e;letter-spacing:-0.149px;white-space:pre;">R$500,00</div>
<div style="position:absolute;left:588.00px;top:419px;font-size:8px;line-height:8px;font-weight:400;color:#5e5e5e;letter-spacing:-0.164px;white-space:pre;">R$500,00</div>
<div style="position:absolute;left:666.00px;top:419px;font-size:8px;line-height:8px;font-weight:400;color:#5e5e5e;letter-spacing:-0.390px;white-space:pre;">R$0,00</div>
<div style="position:absolute;left:742.50px;top:419px;font-size:8px;line-height:8px;font-weight:400;color:#4b8fcf;letter-spacing:0.180px;white-space:pre;">0 Days</div>
<div style="position:absolute;left:817.60px;top:417px;font-size:7.4px;line-height:7.4px;font-weight:400;color:#4a9f8c;letter-spacing:-0.127px;white-space:pre;-webkit-text-stroke:0.25px #4a9f8c;">Paid</div>
</div>
</body></html>
